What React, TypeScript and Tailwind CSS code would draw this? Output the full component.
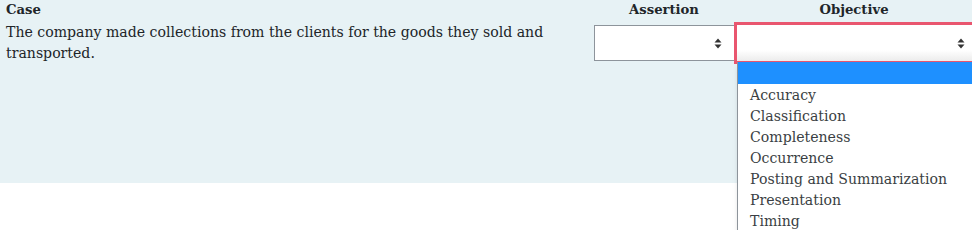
import React from 'react';

const options = [
  'Accuracy',
  'Classification',
  'Completeness',
  'Occurrence',
  'Posting and Summarization',
  'Presentation',
  'Timing',
];

function Arrows() {
  return (
    <svg width="8" height="11" viewBox="0 0 8 11" className="shrink-0">
      <path d="M4 0.5 L7.5 4.5 H0.5 Z" fill="#333" />
      <path d="M4 10.5 L7.5 6.5 H0.5 Z" fill="#333" />
    </svg>
  );
}

export default function App() {
  return (
    <div
      className="relative w-[972px] h-[230px] overflow-hidden bg-white text-[#212529]"
      style={{ fontFamily: '"Roboto Slab", "DejaVu Serif", serif' }}
    >
      <div className="h-[183px] bg-[#e7f2f5] pl-[6px]">
        <div className="grid grid-cols-[588px_140px_243px]">
          <div className="h-[22px] pt-[1px] text-[13.2px] font-bold leading-[18px]">Case</div>
          <div className="h-[22px] pt-[1px] text-center text-[13.2px] font-bold leading-[18px]">Assertion</div>
          <div className="h-[22px] pt-[1px] text-center text-[13.2px] font-bold leading-[18px] w-[240px]">Objective</div>

          <div className="pr-[40px] text-[14.1px] leading-[21px]">
            The company made collections from the clients for the goods they sold and transported.
          </div>
          <div className="pt-[3px]">
            <div className="flex h-[36px] w-[141px] items-center justify-end border border-[#8d949b] bg-white pr-[12px]">
              <Arrows />
            </div>
          </div>
          <div className="relative pt-[3px] pl-[3px]">
            <div className="flex h-[36px] w-[240px] items-center justify-end bg-gradient-to-b from-white from-70% to-[#ececec] pr-[12px] outline-[3px] outline-[#e9566f]">
              <Arrows />
            </div>
          </div>
        </div>
      </div>

      <div className="absolute left-[737px] top-[62px] w-[240px] border-l border-[#8d949b] bg-white shadow-md">
        <div className="h-[22px] bg-[#1e90ff]" />
        <ul className="pt-[1px] text-[14.1px] leading-[21px] text-[#3b3f44]">
          {options.map((o) => (
            <li key={o} className="pl-[12px]">
              {o}
            </li>
          ))}
        </ul>
      </div>
    </div>
  );
}
